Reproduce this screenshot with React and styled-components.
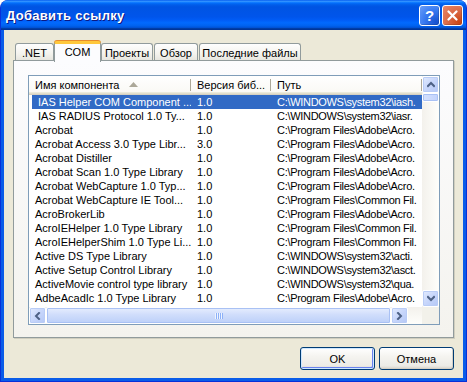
import React from 'react';
import styled, { createGlobalStyle } from 'styled-components';

const GlobalStyle = createGlobalStyle`
  html, body {
    margin: 0;
    padding: 0;
    background: #ffffff;
  }
  body {
    font-family: "Liberation Sans", Arial, sans-serif;
    font-size: 11px;
    color: #000;
  }
`;

const tabs = [
  { label: '.NET', w: 39 },
  { label: 'COM', w: 47, active: true },
  { label: 'Проекты', w: 52 },
  { label: 'Обзор', w: 44 },
  { label: 'Последние файлы', w: 102 },
];

const rows = [
  { name: 'IAS Helper COM Component ...', ver: '1.0', path: 'C:\\WINDOWS\\system32\\iash.', selected: true, indent: true },
  { name: 'IAS RADIUS Protocol 1.0 Ty...', ver: '1.0', path: 'C:\\WINDOWS\\system32\\iasr.', indent: true },
  { name: 'Acrobat', ver: '1.0', path: 'C:\\Program Files\\Adobe\\Acro.' },
  { name: 'Acrobat Access 3.0 Type Libr...', ver: '3.0', path: 'C:\\Program Files\\Adobe\\Acro.' },
  { name: 'Acrobat Distiller', ver: '1.0', path: 'C:\\Program Files\\Adobe\\Acro.' },
  { name: 'Acrobat Scan 1.0 Type Library', ver: '1.0', path: 'C:\\Program Files\\Adobe\\Acro.' },
  { name: 'Acrobat WebCapture 1.0 Typ...', ver: '1.0', path: 'C:\\Program Files\\Adobe\\Acro.' },
  { name: 'Acrobat WebCapture IE Tool...', ver: '1.0', path: 'C:\\Program Files\\Common Fil.' },
  { name: 'AcroBrokerLib', ver: '1.0', path: 'C:\\Program Files\\Adobe\\Acro.' },
  { name: 'AcroIEHelper 1.0 Type Library', ver: '1.0', path: 'C:\\Program Files\\Common Fil.' },
  { name: 'AcroIEHelperShim 1.0 Type Li...', ver: '1.0', path: 'C:\\Program Files\\Common Fil.' },
  { name: 'Active DS Type Library', ver: '1.0', path: 'C:\\WINDOWS\\system32\\acti.' },
  { name: 'Active Setup Control Library', ver: '1.0', path: 'C:\\WINDOWS\\system32\\asct.' },
  { name: 'ActiveMovie control type library', ver: '1.0', path: 'C:\\WINDOWS\\system32\\qua.' },
  { name: 'AdbeAcadIc 1.0 Type Library', ver: '1.0', path: 'C:\\Program Files\\Adobe\\Acro.' },
];

// little chevrons used by the scrollbar buttons
const Chevron = ({ dir }) => {
  const pts = {
    up: '1,5 4,2 7,5',
    down: '1,2 4,5 7,2',
    left: '5,1 2,4 5,7',
    right: '2,1 5,4 2,7',
  }[dir];
  return (
    <svg width="8" height="8" viewBox="0 0 8 8">
      <polyline points={pts} fill="none" stroke="#4D6185" strokeWidth="2" strokeLinecap="square" />
    </svg>
  );
};

const App = () => (
  <>
    <GlobalStyle />
    <Window>
      <TitleBar>
        <Title>Добавить ссылку</Title>
        <CaptionButtons>
          <CaptionButton $kind="help">?</CaptionButton>
          <CaptionButton $kind="close">
            <svg width="11" height="11" viewBox="0 0 11 11">
              <path d="M1.5 1.5 L9.5 9.5 M9.5 1.5 L1.5 9.5" stroke="#fff" strokeWidth="2.2" strokeLinecap="round" />
            </svg>
          </CaptionButton>
        </CaptionButtons>
      </TitleBar>

      <Body>
        <TabStrip>
          {tabs.map((t) => (
            <Tab key={t.label} $w={t.w} $active={t.active}>
              {t.label}
            </Tab>
          ))}
        </TabStrip>

        <TabPanel>
          <ListView>
            <ListContent>
              <Header>
                <HeaderCell>
                  Имя компонента
                  <SortArrow width="9" height="5" viewBox="0 0 9 5">
                    <polygon points="0,5 4.5,0 9,5" fill="#ACA899" />
                  </SortArrow>
                </HeaderCell>
                <HeaderCell>Версия биб...</HeaderCell>
                <HeaderCell>Путь</HeaderCell>
              </Header>
              {rows.map((r) => (
                <Row key={r.name} $selected={r.selected}>
                  <Cell $indent={r.indent}>{r.name}</Cell>
                  <Cell>{r.ver}</Cell>
                  <Cell $tight>{r.path}</Cell>
                </Row>
              ))}
            </ListContent>

            <VScroll>
              <ScrollButton>
                <Chevron dir="up" />
              </ScrollButton>
              <VThumb />
              <Track />
              <ScrollButton>
                <Chevron dir="down" />
              </ScrollButton>
            </VScroll>

            <HScroll>
              <ScrollButton>
                <Chevron dir="left" />
              </ScrollButton>
              <HThumb>
                <Grip />
              </HThumb>
              <ScrollButton>
                <Chevron dir="right" />
              </ScrollButton>
            </HScroll>
            <Corner />
          </ListView>
        </TabPanel>

        <ButtonRow>
          <Button $default>OK</Button>
          <Button>Отмена</Button>
        </ButtonRow>
      </Body>
    </Window>
  </>
);

export default App;

const Window = styled.div`
  width: 467px;
  height: 382px;
  box-sizing: border-box;
  display: flex;
  flex-direction: column;
  background: #0a5ce8;
  border: 1px solid #0831d9;
  border-top: none;
  border-radius: 8px 8px 0 0;
  overflow: hidden;
`;

const TitleBar = styled.div`
  height: 30px;
  flex: none;
  display: flex;
  align-items: center;
  justify-content: space-between;
  padding: 0 4px 0 6px;
  margin: 0 -1px;
  border-radius: 8px 8px 0 0;
  background: linear-gradient(
    to bottom,
    #0058ee 0%,
    #3593ff 4%,
    #288eff 6%,
    #127dff 8%,
    #036ffc 10%,
    #0262ee 14%,
    #0057e5 20%,
    #0054e3 24%,
    #0055eb 56%,
    #005bf5 66%,
    #026afe 76%,
    #0062ef 86%,
    #0052d6 92%,
    #0040ab 94%,
    #003092 100%
  );
`;

const Title = styled.div`
  color: #fff;
  font-family: "Liberation Sans", Arial, sans-serif;
  font-weight: bold;
  font-size: 13px;
  letter-spacing: 0.3px;
  text-shadow: 1px 1px 0 #0a1883;
  padding-top: 1px;
`;

const CaptionButtons = styled.div`
  display: flex;
  gap: 2px;
`;

const CaptionButton = styled.div`
  width: 21px;
  height: 21px;
  box-sizing: border-box;
  border: 1px solid #fff;
  border-radius: 3px;
  display: flex;
  align-items: center;
  justify-content: center;
  color: #fff;
  font-family: "Liberation Sans", Arial, sans-serif;
  font-weight: bold;
  font-size: 15px;
  background: ${(p) =>
    p.$kind === 'close'
      ? 'radial-gradient(circle at 85% 85%, #cc4614 0%, #dc6d4a 55%, #e9876a 100%)'
      : 'radial-gradient(circle at 85% 85%, #1651d0 0%, #3a7cf2 55%, #6a9ef7 100%)'};
  box-shadow: inset -1px -1px 0 rgba(0, 0, 0, 0.15);
`;

const Body = styled.div`
  flex: 1;
  display: flex;
  flex-direction: column;
  margin: 0 3px 3px;
  padding: 11px 9px 8px;
  background: #ece9d8;
`;

const TabStrip = styled.div`
  display: flex;
  align-items: flex-end;
  gap: 1px;
  height: 19px;
  padding-left: 2px;
  position: relative;
  z-index: 1;
`;

const Tab = styled.div`
  width: ${(p) => p.$w}px;
  box-sizing: border-box;
  height: ${(p) => (p.$active ? 21 : 17)}px;
  margin: ${(p) => (p.$active ? '0 -1px -2px' : '0')};
  display: flex;
  align-items: center;
  justify-content: center;
  padding-top: ${(p) => (p.$active ? 0 : 1)}px;
  padding-bottom: ${(p) => (p.$active ? 2 : 0)}px;
  border: 1px solid #919b9c;
  border-bottom: none;
  border-top: ${(p) => (p.$active ? '3px solid #ffc83c' : '1px solid #919b9c')};
  border-radius: 3px 3px 0 0;
  background: ${(p) =>
    p.$active ? '#fcfcfe' : 'linear-gradient(to bottom, #fefefe 0%, #f4f3ee 60%, #e7e6df 100%)'};
  box-shadow: ${(p) => (p.$active ? 'inset 0 -1px 0 #fcfcfe, 0 -1px 0 #e68b2c' : 'none')};
  white-space: nowrap;
`;

const TabPanel = styled.div`
  height: 278px;
  box-sizing: border-box;
  display: flex;
  padding: 14px 13px 12px 14px;
  border: 1px solid #919b9c;
  background: linear-gradient(to bottom, #fcfcfe 0%, #f4f3ee 100%);
  box-shadow: 1px 1px 0 #d0cebf;
`;

const ListView = styled.div`
  flex: 1;
  display: grid;
  grid-template-columns: 1fr 17px;
  grid-template-rows: 1fr 17px;
  border: 1px solid #7f9db9;
  background: #fff;
  overflow: hidden;
`;

const ListContent = styled.div`
  overflow: hidden;
  display: flex;
  flex-direction: column;
`;

const Header = styled.div`
  height: 19px;
  flex: none;
  display: grid;
  grid-template-columns: 162px 80px 1fr;
  background: linear-gradient(to bottom, #ffffff 0%, #f9f8f3 100%);
  box-shadow: inset 0 -1px 0 #d6d2c2, inset 0 -2px 0 #e2decd, inset 0 -3px 0 #ebeadb;
`;

const HeaderCell = styled.div`
  position: relative;
  display: flex;
  align-items: center;
  padding: 0 0 2px 6px;
  white-space: nowrap;
  overflow: hidden;

  &::after {
    content: '';
    position: absolute;
    right: 0;
    top: 3px;
    bottom: 4px;
    width: 1px;
    background: #aca899;
    box-shadow: 1px 0 0 #fff;
  }
`;

const SortArrow = styled.svg`
  margin-left: 10px;
`;

const Row = styled.div`
  height: 14px;
  flex: none;
  margin-left: 3px;
  display: grid;
  grid-template-columns: 159px 80px 1fr;
  align-items: center;
  background: ${(p) => (p.$selected ? '#316ac5' : 'transparent')};
  color: ${(p) => (p.$selected ? '#fff' : '#000')};
`;

const Cell = styled.div`
  padding-left: ${(p) => (p.$indent ? 6 : 3)}px;
  white-space: nowrap;
  overflow: hidden;
  line-height: 14px;
  letter-spacing: ${(p) => (p.$tight ? '-0.3px' : '0')};

  & + & {
    padding-left: 6px;
  }
`;

const VScroll = styled.div`
  display: flex;
  flex-direction: column;
  background: linear-gradient(to right, #f3f1ec 0%, #fefefb 100%);
`;

const HScroll = styled.div`
  display: flex;
  background: linear-gradient(to bottom, #f3f1ec 0%, #fefefb 100%);
  padding-right: 2px;
`;

const Corner = styled.div`
  background: #f2f1ea;
`;

const ScrollButton = styled.div`
  width: 17px;
  height: 17px;
  flex: none;
  box-sizing: border-box;
  display: flex;
  align-items: center;
  justify-content: center;
  border: 1px solid #fff;
  border-radius: 2px;
  background: linear-gradient(135deg, #e2ebfe 0%, #c7d6fb 50%, #b4c7f5 100%);
  box-shadow: inset 0 0 0 1px #b9ccf6;
`;

const VThumb = styled.div`
  height: 9px;
  flex: none;
  box-sizing: border-box;
  border: 1px solid #fff;
  border-radius: 2px;
  background: linear-gradient(to right, #d5e1fd 0%, #c2d3fc 100%);
  box-shadow: inset 0 0 0 1px #a9c1f4;
`;

const Track = styled.div`
  flex: 1;
`;

const HThumb = styled.div`
  width: 345px;
  flex: none;
  box-sizing: border-box;
  display: flex;
  align-items: center;
  justify-content: center;
  border: 1px solid #fff;
  border-radius: 2px;
  background: linear-gradient(to bottom, #e6eefe 0%, #d0ddfb 45%, #bcd0f9 100%);
  box-shadow: inset 0 0 0 1px #a9c1f4;
`;

const Grip = styled.div`
  width: 8px;
  height: 6px;
  background: repeating-linear-gradient(to right, #eef4fe 0 1px, #8cb0f8 1px 2px);
`;

const ButtonRow = styled.div`
  display: flex;
  justify-content: flex-end;
  gap: 4px;
  margin-top: 9px;
`;

const Button = styled.div`
  width: 75px;
  height: 23px;
  box-sizing: border-box;
  display: flex;
  align-items: center;
  justify-content: center;
  font-weight: normal;
  border: 1px solid #003c74;
  border-radius: 3px;
  background: linear-gradient(to bottom, #ffffff 0%, #f5f4f0 40%, #ecebe6 85%, #d6d0c5 100%);
  box-shadow: ${(p) =>
    p.$default
      ? 'inset 0 0 0 1px #cee7ff, inset -1px -1px 0 1px #6982ee'
      : 'inset -1px -1px 0 #d6d0c5'};
`;
